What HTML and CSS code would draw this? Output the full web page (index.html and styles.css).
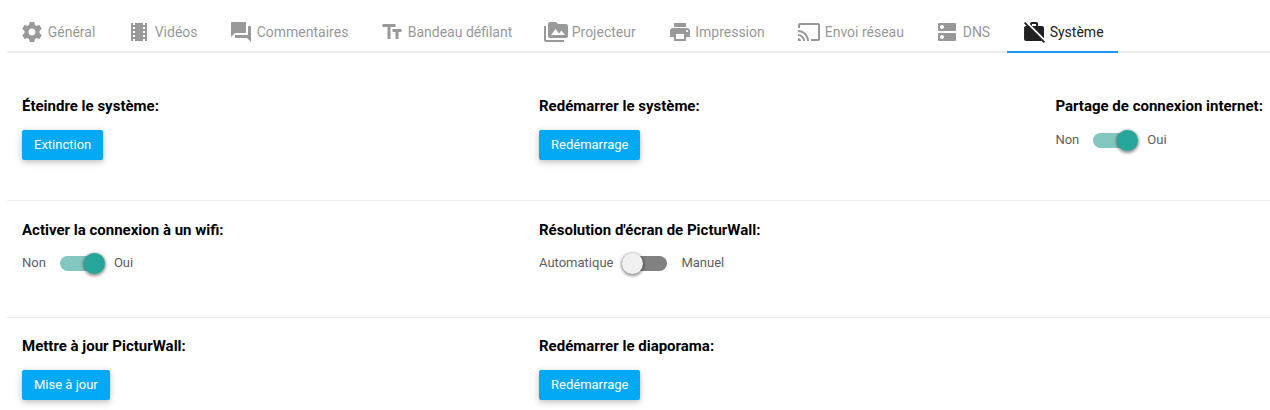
FILE: index.html
```html
<!DOCTYPE html>
<html lang="fr">
<head>
<meta charset="utf-8">
<title>PicturWall</title>
<link rel="stylesheet" href="styles.css">
</head>
<body>
<nav class="tabs">
  <a class="tab t-general"><svg class="icon icon-narrow" viewBox="2 0 22 24"><path d="M19.43 12.98c.04-.32.07-.64.07-.98s-.03-.66-.07-.98l2.11-1.65c.19-.15.24-.42.12-.64l-2-3.46c-.12-.22-.39-.3-.61-.22l-2.49 1c-.52-.4-1.08-.73-1.69-.98l-.38-2.65C14.46 2.18 14.25 2 14 2h-4c-.25 0-.46.18-.49.42l-.38 2.65c-.61.25-1.17.59-1.69.98l-2.49-1c-.23-.09-.49 0-.61.22l-2 3.46c-.13.22-.07.49.12.64l2.11 1.65c-.04.32-.07.65-.07.98s.03.66.07.98l-2.11 1.65c-.19.15-.24.42-.12.64l2 3.46c.12.22.39.3.61.22l2.49-1c.52.4 1.08.73 1.69.98l.38 2.65c.03.24.24.42.49.42h4c.25 0 .46-.18.49-.42l.38-2.65c.61-.25 1.17-.59 1.69-.98l2.49 1c.23.09.49 0 .61-.22l2-3.46c.12-.22.07-.49-.12-.64l-2.11-1.65zM12 15.5c-1.93 0-3.5-1.57-3.5-3.5s1.57-3.5 3.5-3.5 3.5 1.57 3.5 3.5-1.57 3.5-3.5 3.5z"/></svg><span>Général</span></a>
  <a class="tab t-videos"><svg class="icon" viewBox="0 0 24 24"><path d="M18 3v2h-2V3H8v2H6V3H4v18h2v-2h2v2h8v-2h2v2h2V3h-2zM8 17H6v-2h2v2zm0-4H6v-2h2v2zm0-4H6V7h2v2zm10 8h-2v-2h2v2zm0-4h-2v-2h2v2zm0-4h-2V7h2v2z"/></svg><span>Vidéos</span></a>
  <a class="tab t-comments"><svg class="icon" viewBox="0 0 24 24"><path d="M21 6h-2v9H6v2c0 .55.45 1 1 1h11l4 4V7c0-.55-.45-1-1-1zm-4 6V3c0-.55-.45-1-1-1H3c-.55 0-1 .45-1 1v14l4-4h10c.55 0 1-.45 1-1z"/></svg><span>Commentaires</span></a>
  <a class="tab t-banner"><svg class="icon" viewBox="0 0 24 24"><path d="M2.5 4v3h5v12h3V7h5V4h-13zm19 5h-9v3h3v7h3v-7h3V9z"/></svg><span>Bandeau défilant</span></a>
  <a class="tab t-projector"><svg class="icon" viewBox="0 0 24 24"><path d="M2 6H0v5h.01L0 20c0 1.1.9 2 2 2h18v-2H2V6zm20-2h-8l-2-2H6c-1.1 0-1.99.9-1.99 2L4 16c0 1.1.9 2 2 2h16c1.1 0 2-.9 2-2V6c0-1.1-.9-2-2-2zM7 15l4.5-6 3.5 4.51 2.5-3.01L21 15H7z"/></svg><span>Projecteur</span></a>
  <a class="tab t-print"><svg class="icon" viewBox="0 0 24 24"><path d="M19 8H5c-1.66 0-3 1.34-3 3v6h4v4h12v-4h4v-6c0-1.66-1.34-3-3-3zm-3 11H8v-5h8v5zm3-7c-.55 0-1-.45-1-1s.45-1 1-1 1 .45 1 1-.45 1-1 1zm-1-9H6v4h12V3z"/></svg><span>Impression</span></a>
  <a class="tab t-cast"><svg class="icon" viewBox="0 0 24 24"><path d="M21 3H3c-1.1 0-2 .9-2 2v3h2V5h18v14h-7v2h7c1.1 0 2-.9 2-2V5c0-1.1-.9-2-2-2zM1 18v3h3c0-1.66-1.34-3-3-3zm0-4v2c2.76 0 5 2.24 5 5h2c0-3.87-3.13-7-7-7zm0-4v2c4.97 0 9 4.03 9 9h2c0-6.08-4.93-11-11-11z"/></svg><span>Envoi réseau</span></a>
  <a class="tab t-dns"><svg class="icon" viewBox="0 0 24 24"><path d="M20 13H4c-.55 0-1 .45-1 1v6c0 .55.45 1 1 1h16c.55 0 1-.45 1-1v-6c0-.55-.45-1-1-1zM7 19c-1.1 0-2-.9-2-2s.9-2 2-2 2 .9 2 2-.9 2-2 2zM20 3H4c-.55 0-1 .45-1 1v6c0 .55.45 1 1 1h16c.55 0 1-.45 1-1V4c0-.55-.45-1-1-1zM7 9c-1.1 0-2-.9-2-2s.9-2 2-2 2 .9 2 2-.9 2-2 2z"/></svg><span>DNS</span></a>
  <a class="tab t-system active"><svg class="icon" viewBox="0 0 24 24"><path d="M23 21.74l-1.46-1.46L7.21 5.95 3.25 1.99 1.99 3.25l2.7 2.7h-.64c-1.11 0-1.99.89-1.99 2l-.01 11c0 1.11.89 2 2 2h15.64L21.74 23 23 21.74zM22 7.95c.05-1.11-.84-2-1.95-1.95h-4V3.95c0-1.11-.89-2-2-1.95h-4c-1.11-.05-2 .84-2 1.95v.32l13.95 14V7.95zM14.05 6H10V3.95h4.05V6z"/></svg><span>Système</span></a>
</nav>
<main>
  <section class="row row-first">
    <div class="cell"><h2 class="title">Éteindre le système:</h2><button class="btn">Extinction</button></div>
    <div class="cell"><h2 class="title">Redémarrer le système:</h2><button class="btn">Redémarrage</button></div>
    <div class="cell"><h2 class="title">Partage de connexion internet:</h2><div class="switch"><span>Non</span><span class="lever on"></span><span>Oui</span></div></div>
  </section>
  <section class="row row-second">
    <div class="cell"><h2 class="title">Activer la connexion à un wifi:</h2><div class="switch"><span>Non</span><span class="lever on"></span><span>Oui</span></div></div>
    <div class="cell"><h2 class="title">Résolution d'écran de PicturWall:</h2><div class="switch"><span>Automatique</span><span class="lever"></span><span>Manuel</span></div></div>
  </section>
  <section class="row row-third">
    <div class="cell"><h2 class="title">Mettre à jour PicturWall:</h2><button class="btn">Mise à jour</button></div>
    <div class="cell"><h2 class="title">Redémarrer le diaporama:</h2><button class="btn">Redémarrage</button></div>
  </section>
</main>
</body>
</html>
```
FILE: styles.css
```css
* { box-sizing: border-box; }
body {
  margin: 0;
  padding: 12px 0 0 7px;
  height: 410px;
  overflow: hidden;
  background: #fff;
  font-family: Roboto, sans-serif;
}
.tabs {
  display: flex;
  height: 41px;
  box-shadow: inset 0 -2px 0 #eee;
}
.tab {
  display: flex;
  flex: none;
  align-items: center;
  gap: 3.7px;
  height: 41px;
  padding: 0 0 1px 15px;
  color: #999;
  font-size: 14px;
  white-space: nowrap;
}
.t-general { width: 105px; }
.t-videos { width: 102px; }
.t-comments { width: 151px; }
.t-banner { width: 164px; }
.t-projector { width: 123.5px; }
.t-print { width: 129.5px; }
.t-cast { width: 138px; }
.t-dns { width: 87px; }
.t-system { width: 111px; }
.active {
  color: #212121;
  box-shadow: inset 0 -2px 0 #2196f3;
}
.icon {
  flex: none;
  width: 24px;
  height: 24px;
  fill: currentColor;
}
.icon-narrow { width: 22px; }
.row {
  display: grid;
  grid-template-columns: 517px 516.4px 1fr;
  border-bottom: 1px solid #eee;
}
.row-first { height: 148px; padding-top: 43px; }
.row-second { height: 117px; padding-top: 19px; }
.row-third { height: 92px; padding-top: 18px; border-bottom: 0; }
.cell { padding-left: 15px; }
.title {
  margin: 0 0 14px;
  color: #000;
  font-size: 15px;
  font-weight: 700;
  line-height: 20px;
  white-space: nowrap;
}
.btn {
  display: block;
  height: 30px;
  padding: 0 12px 2px;
  border: 0;
  border-radius: 2px;
  background: #03a9f4;
  box-shadow: 0 2px 5px rgba(0, 0, 0, .16), 0 2px 10px rgba(0, 0, 0, .12);
  color: #fff;
  font: 400 13px Roboto, sans-serif;
}
.switch {
  display: flex;
  align-items: center;
  height: 21px;
  color: #5e5e5e;
  font-size: 13px;
  line-height: 19px;
}
.switch > span:not(.lever) { padding-bottom: 2px; }
.row-second .title { margin-bottom: 13px; }
.lever {
  position: relative;
  width: 40px;
  height: 15px;
  margin: 0 14px;
  border-radius: 15px;
  background: #818181;
}
.lever::after {
  content: "";
  position: absolute;
  top: -3px;
  left: -5px;
  width: 21px;
  height: 21px;
  border-radius: 50%;
  background: #f1f1f1;
  box-shadow: 0 1px 3px 1px rgba(0, 0, 0, .4);
}
.lever.on { background: #84c7c1; }
.lever.on::after { left: 24px; background: #26a69a; }
```
